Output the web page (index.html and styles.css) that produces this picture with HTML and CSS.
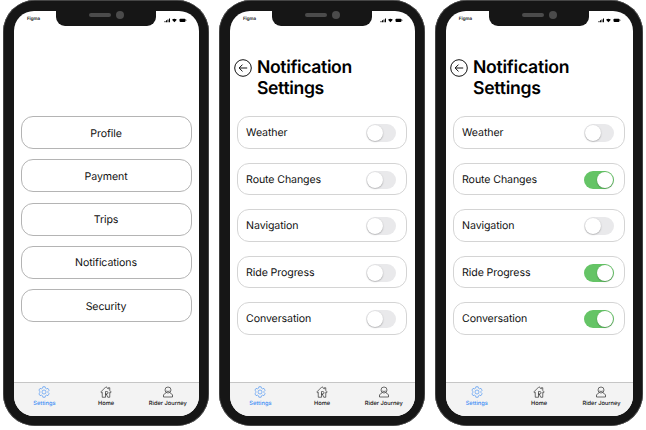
FILE: index.html
```html
<!DOCTYPE html>
<html lang="en">
<head>
<meta charset="utf-8">
<title>Settings</title>
<link rel="stylesheet" href="styles.css">
</head>
<body>
<svg class="defs" aria-hidden="true">
  <symbol id="status" viewBox="0 0 23 5">
    <path d="M.5 3h1v1.200h-1zM2 2.300h1v1.900H2zM3.500 1.400h1v2.800h-1zM5 .5h1v3.700H5z"/>
    <path d="M8 1.700Q10.400-.3 12.800 1.700L10.400 4.300z"/>
    <rect x="15.500" y=".8" width="6" height="3.100" rx=".8"/><rect x="21.800" y="1.700" width=".5" height="1.200"/>
  </symbol>
  <symbol id="gear" viewBox="0 0 24 24">
    <path d="M9.800 1.500h4.400l.8 3 2 1.100 3-.8 2.200 3.800-2.200 2.200v2.400l2.200 2.200-2.200 3.800-3-.8-2 1.100-.8 3H9.800l-.8-3-2-1.100-3 .8-2.200-3.800L4 13.200v-2.400L1.800 8.600 4 4.800l3 .8 2-1.100z"/><circle cx="12" cy="12" r="4"/>
  </symbol>
  <symbol id="home" viewBox="0 0 24 24">
    <path d="M4.500 22.500V12.500L3 13.500 1.500 12 12 1.500l4.500 4.300V3.500h3v5.300l3 3.200-1.500 1.500-1.500-1v10H15.500L12.500 16H11v6.500zM11 16v-5h2.500a2.500 2.500 0 0 1 0 5H11"/>
  </symbol>
  <symbol id="rider" viewBox="0 0 24 24">
    <circle cx="12" cy="8" r="6"/><path d="M8.500 13.200 3 17.500V22h18v-4.500l-5.500-4.300M8.500 10q3.500 2 7 0"/>
  </symbol>
  <symbol id="back" viewBox="0 0 18 18">
    <circle cx="9" cy="9" r="8.300"/><path d="M13.200 9H5.300M8.500 5.600 5.100 9l3.400 3.400"/>
  </symbol>
</svg>
<main class="board">
  <section class="phone">
    <div class="screen">
      <header class="status"><span>Figma</span><div class="notch"><i class="speaker"></i><i class="camera"></i></div><svg><use href="#status"/></svg></header>
      <div class="menu">
        <div class="card">Profile</div>
        <div class="card">Payment</div>
        <div class="card">Trips</div>
        <div class="card">Notifications</div>
        <div class="card">Security</div>
      </div>
      <nav class="tabs">
        <div class="tab active"><svg><use href="#gear"/></svg>Settings</div>
        <div class="tab"><svg><use href="#home"/></svg>Home</div>
        <div class="tab"><svg><use href="#rider"/></svg>Rider Journey</div>
      </nav>
    </div>
  </section>
  <section class="phone">
    <div class="screen">
      <header class="status"><span>Figma</span><div class="notch"><i class="speaker"></i><i class="camera"></i></div><svg><use href="#status"/></svg></header>
      <div class="heading"><svg><use href="#back"/></svg><h1>Notification<br>Settings</h1></div>
      <div class="options">
        <div class="card">Weather<i class="toggle"></i></div>
        <div class="card">Route Changes<i class="toggle"></i></div>
        <div class="card">Navigation<i class="toggle"></i></div>
        <div class="card">Ride Progress<i class="toggle"></i></div>
        <div class="card">Conversation<i class="toggle"></i></div>
      </div>
      <nav class="tabs">
        <div class="tab active"><svg><use href="#gear"/></svg>Settings</div>
        <div class="tab"><svg><use href="#home"/></svg>Home</div>
        <div class="tab"><svg><use href="#rider"/></svg>Rider Journey</div>
      </nav>
    </div>
  </section>
  <section class="phone wide">
    <div class="screen">
      <header class="status"><span>Figma</span><div class="notch"><i class="speaker"></i><i class="camera"></i></div><svg><use href="#status"/></svg></header>
      <div class="heading"><svg><use href="#back"/></svg><h1>Notification<br>Settings</h1></div>
      <div class="options">
        <div class="card">Weather<i class="toggle"></i></div>
        <div class="card">Route Changes<i class="toggle on"></i></div>
        <div class="card">Navigation<i class="toggle"></i></div>
        <div class="card">Ride Progress<i class="toggle on"></i></div>
        <div class="card">Conversation<i class="toggle on"></i></div>
      </div>
      <nav class="tabs">
        <div class="tab active"><svg><use href="#gear"/></svg>Settings</div>
        <div class="tab"><svg><use href="#home"/></svg>Home</div>
        <div class="tab"><svg><use href="#rider"/></svg>Rider Journey</div>
      </nav>
    </div>
  </section>
</main>
</body>
</html>
```
FILE: styles.css
```css
* { box-sizing: border-box; }
body { margin: 0; background: #fff; color: #111; font-family: Inter, "Liberation Sans", sans-serif; overflow: hidden; text-rendering: geometricPrecision; }
.defs { position: absolute; width: 0; height: 0; }
.board { display: flex; gap: 10.300px; padding-left: 3.300px; }
.phone { width: 205.700px; height: 426.300px; padding: 11px 10.300px 10.500px; background: #161616; border-radius: 32px; box-shadow: inset 0 0 0 .7px #555; }
.phone.wide { width: 207.700px; }
.screen { height: 100%; display: flex; flex-direction: column; background: #fff; border-radius: 20px; overflow: hidden; }

.status { height: 15px; display: flex; justify-content: space-between; font-size: 4.500px; font-weight: 600; line-height: 18px; padding: 0 12px 0 13.300px; }
.status span { width: 29px; }
.status svg { width: 23px; height: 5px; margin-top: 6.800px; margin-left: 7px; }
.notch { width: 100px; height: 14.700px; background: #161616; border-radius: 0 0 9px 9px; display: flex; align-items: center; padding: 0 0 7px 33px; gap: 5px; }
.speaker { width: 22px; height: 4.300px; border-radius: 2px; background: #4b4b4b; }
.camera { width: 8px; height: 8px; border-radius: 50%; background: #4b4b4b; }

.card { border: 1px solid #b4b4b4; border-radius: 12px; font-size: 10.600px; letter-spacing: -.1px; display: flex; align-items: center; }
.menu { display: flex; flex-direction: column; gap: 10.200px; margin-top: 90.300px; padding: 0 7.200px 0 7px; }
.menu .card { height: 33px; justify-content: center; padding-top: 1px; }

.heading { display: flex; gap: 5.200px; height: 90.300px; padding: 30px 0 0 4.200px; }
.heading svg { width: 18px; height: 18px; margin-top: 3px; fill: none; stroke: #111; stroke-width: 1; }
h1 { margin: 1px 0 0; font-size: 17.600px; line-height: 21.300px; font-weight: 600; letter-spacing: -.36px; color: #000; }
.wide h1 { letter-spacing: -.24px; }
.options { display: flex; flex-direction: column; gap: 13.800px; padding: 0 7.200px 0 7px; }
.options .card { height: 32.700px; justify-content: space-between; padding: 0 10px 0 8.500px; border-color: #d4d4d4; }
.toggle { width: 30px; height: 18px; padding: 1px; border-radius: 9px; background: #e9e9eb; display: flex; margin-top: 1px; }
.toggle::before { content: ""; width: 16px; height: 16px; border-radius: 50%; background: #fff; box-shadow: 0 .5px 1.500px rgba(0,0,0,.35); }
.toggle.on { background: #65c466; justify-content: flex-end; }

.tabs { margin-top: auto; height: 33.700px; flex: none; display: grid; grid-template-columns: repeat(3, 1fr); background: #f3f3f3; border-top: 1px solid #c6c6c6; }
.tab { display: flex; flex-direction: column; align-items: center; padding-top: 3px; font-size: 5.700px; line-height: 8px; font-weight: 500; white-space: nowrap; }
.tab svg { width: 12px; height: 12px; margin-bottom: 2px; fill: none; stroke: currentColor; stroke-width: 1.200; }
.tab.active { color: #3b8cf5; }
```
